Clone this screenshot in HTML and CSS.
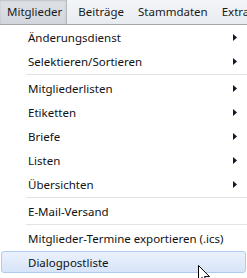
FILE: index.html
```html
<!DOCTYPE html>
<html lang="de">
<head>
    <meta charset="UTF-8">
    <title>Mitglieder</title>
    <link rel="stylesheet" href="styles.css">
</head>
<body>
    <div class="menubar">
        <div class="top active">Mitglieder</div>
        <div class="top">Beiträge</div>
        <div class="top">Stammdaten</div>
        <div class="top">Extra</div>
    </div>

    <div class="menu">
        <div class="item sub">Änderungsdienst</div>
        <div class="item sub">Selektieren/Sortieren</div>
        <div class="sep"></div>
        <div class="item sub">Mitgliederlisten</div>
        <div class="item sub">Etiketten</div>
        <div class="item sub">Briefe</div>
        <div class="item sub">Listen</div>
        <div class="item sub">Übersichten</div>
        <div class="sep"></div>
        <div class="item">E-Mail-Versand</div>
        <div class="sep"></div>
        <div class="item">Mitglieder-Termine exportieren (.ics)</div>
        <div class="item hover">Dialogpostliste</div>

        <!-- Mauszeiger -->
        <svg class="cursor" width="12" height="19" viewBox="0 0 12 19">
            <path d="M0.5 0.5 L0.5 16 L4.2 12.4 L6.8 18.3 L9 17.4 L6.5 11.6 L11.5 11.6 Z" fill="#fff" stroke="#000" stroke-width="1"/>
        </svg>
    </div>
</body>
</html>
```

FILE: styles.css
```css
body {
    margin: 0;
    padding: 0;
    width: 247px;
    height: 278px;
    overflow: hidden;
    background-color: #fff;
    font-family: "Noto Sans", "Open Sans", sans-serif;
    font-size: 11.5px;
    color: #111;
}
.menubar {
    display: flex;
    height: 24px;
    overflow: hidden;
    background: linear-gradient(#f3f5f8, #e8ebf0);
    border-bottom: 1px solid #a3a6ab;
}
.top {
    padding: 0 7px;
    line-height: 24px;
    color: #1a1a1a;
    white-space: nowrap;
}
.top.active {
    padding: 0 4px 0 7px;
    margin-right: 4px;
    background: linear-gradient(#dfe2e7, #d3d7dd);
    border-right: 1px solid #b5b9c0;
    box-shadow: inset 0 1px 2px rgba(0, 0, 0, 0.15);
}
.menu {
    position: relative;
    display: flex;
    flex-direction: column;
}
.item {
    height: 22px;
    line-height: 22px;
    margin: 1px;
    padding-left: 26px;
    white-space: nowrap;
    border: 1px solid transparent;
    border-radius: 3px;
    box-sizing: border-box;
}
.item.sub {
    background: url("data:image/svg+xml;utf8,<svg xmlns='http://www.w3.org/2000/svg' width='4' height='7'><path d='M0 0 L4 3.5 L0 7 Z' fill='%23161628'/></svg>") no-repeat 231px 7px;
}
.item.hover {
    background: linear-gradient(#eaf1fc, #d7e4f8);
    border-color: #aecaf0;
}
.sep {
    height: 1px;
    margin: 1px 0 1px 26px;
    background-color: #e2e3e4;
}
.cursor {
    position: absolute;
    left: 198px;
    top: 240px;
}
```
